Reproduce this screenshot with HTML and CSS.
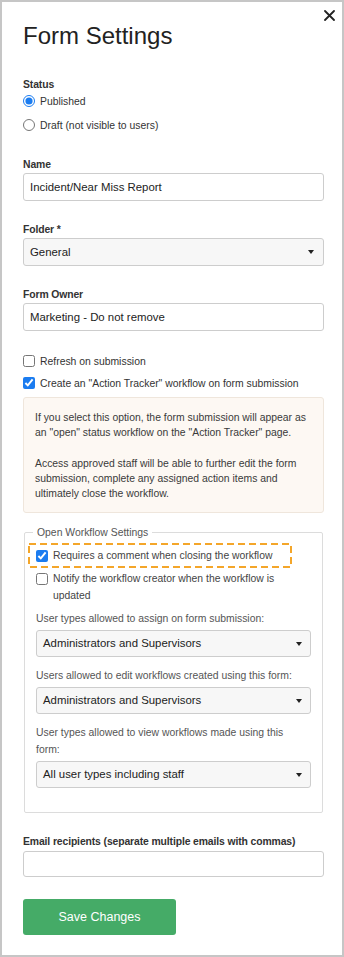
FILE: index.html
```html
<!DOCTYPE html>
<html lang="en">
<head>
    <meta charset="UTF-8">
    <meta name="viewport" content="width=device-width, initial-scale=1.0">
    <title>Form Settings</title>
    <link rel="stylesheet" href="styles.css">
</head>
<body>

<div class="panel">
    <button class="close" aria-label="Close">
        <svg width="11" height="11" viewBox="0 0 11 11"><path d="M1 1L10 10M10 1L1 10" stroke="#222" stroke-width="1.8" stroke-linecap="round"/></svg>
    </button>

    <h1 class="title">Form Settings</h1>

    <!-- Status -->
    <div class="status">
        <div class="label">Status</div>
        <label class="option"><input type="radio" name="status" checked>Published</label>
        <label class="option option-next"><input type="radio" name="status">Draft (not visible to users)</label>
    </div>

    <!-- Basic fields -->
    <div class="field field-name">
        <div class="label">Name</div>
        <input class="input" type="text" value="Incident/Near Miss Report">
    </div>

    <div class="field">
        <div class="label">Folder *</div>
        <div class="select">
            <span>General</span>
            <svg width="6" height="4" viewBox="0 0 6 4"><path d="M0 0H6L3 4Z" fill="#222"/></svg>
        </div>
    </div>

    <div class="field">
        <div class="label">Form Owner</div>
        <input class="input" type="text" value="Marketing - Do not remove">
    </div>

    <!-- Checkboxes -->
    <label class="option option-refresh"><input type="checkbox">Refresh on submission</label>
    <label class="option option-tracker"><input type="checkbox" checked>Create an "Action Tracker" workflow on form submission</label>

    <div class="info">
        <p>If you select this option, the form submission will appear as an "open" status workflow on the "Action Tracker" page.</p>
        <p>Access approved staff will be able to further edit the form submission, complete any assigned action items and ultimately close the workflow.</p>
    </div>

    <!-- Workflow settings -->
    <fieldset class="workflow">
        <legend>Open Workflow Settings</legend>

        <div class="highlight">
            <label class="option fs-option"><input type="checkbox" checked>Requires a comment when closing the workflow</label>
            <svg class="dash" width="264" height="25" viewBox="0 0 264 25"><rect x="1" y="1" width="262" height="23" fill="none" stroke="#f4a62a" stroke-width="2" stroke-dasharray="7 4"/></svg>
        </div>

        <label class="option fs-option fs-multi"><input type="checkbox">Notify the workflow creator when the workflow is updated</label>

        <div class="fs-label fs-first">User types allowed to assign on form submission:</div>
        <div class="select fs-select">
            <span>Administrators and Supervisors</span>
            <svg width="6" height="4" viewBox="0 0 6 4"><path d="M0 0H6L3 4Z" fill="#222"/></svg>
        </div>

        <div class="fs-label">Users allowed to edit workflows created using this form:</div>
        <div class="select fs-select">
            <span>Administrators and Supervisors</span>
            <svg width="6" height="4" viewBox="0 0 6 4"><path d="M0 0H6L3 4Z" fill="#222"/></svg>
        </div>

        <div class="fs-label">User types allowed to view workflows made using this form:</div>
        <div class="select fs-select">
            <span>All user types including staff</span>
            <svg width="6" height="4" viewBox="0 0 6 4"><path d="M0 0H6L3 4Z" fill="#222"/></svg>
        </div>
    </fieldset>

    <div class="field field-email">
        <div class="label">Email recipients (separate multiple emails with commas)</div>
        <input class="input input-email" type="text">
    </div>

    <button class="save">Save Changes</button>
</div>

</body>
</html>
```

FILE: styles.css
```css
/* Basic Reset */
* {
    margin: 0;
    padding: 0;
    box-sizing: border-box;
}
body {
    font-family: "Liberation Sans", Arial, sans-serif;
    font-size: 10.4px;
    color: #333;
    background: #fff;
}
/* Panel */
.panel {
    position: relative;
    width: 344px;
    height: 957px;
    border: 2px solid #c6c6c6;
    padding: 20px 18px 0 21px;
}
.close {
    position: absolute;
    top: 8px;
    right: 7px;
    width: 11px;
    height: 11px;
    border: none;
    background: none;
    display: flex;
}
.title {
    font-size: 24px;
    line-height: 28px;
    font-weight: 400;
    color: #222;
}
/* Labels and options */
.label {
    font-weight: 700;
    line-height: 15px;
    letter-spacing: -0.12px;
    color: #333;
}
.status {
    margin-top: 27px;
}
.option {
    display: flex;
    align-items: center;
    height: 18px;
    color: #333;
}
.option input {
    width: 12px;
    height: 12px;
    margin: 0 5px 0 0;
    accent-color: #1b7cf0;
    flex-shrink: 0;
}
.option-next {
    margin-top: 6px;
}
/* Fields */
.field {
    margin-top: 21px;
}
.field-name {
    margin-top: 23px;
}
.field .label {
    margin-bottom: 1px;
}
.input {
    display: block;
    width: 100%;
    height: 28px;
    border: 1px solid #cdcdcd;
    border-radius: 3px;
    padding: 0 6px;
    font-family: "Liberation Sans", Arial, sans-serif;
    font-size: 11.4px;
    color: #222;
    background: #fff;
    outline: none;
}
.select {
    display: flex;
    align-items: center;
    justify-content: space-between;
    height: 28px;
    border: 1px solid #cdcdcd;
    border-radius: 3px;
    padding: 0 9px 0 6px;
    font-size: 11.4px;
    color: #222;
    background: #f7f7f7;
}
.option-refresh {
    margin-top: 21px;
}
.option-tracker {
    margin-top: 4px;
}
/* Info box */
.info {
    margin-top: 5px;
    background: #fdf8f3;
    border: 1px solid #efe6dc;
    border-radius: 3px;
    padding: 12px 11px 11px 11px;
    line-height: 15px;
    color: #3a3a3a;
}
.info p + p {
    margin-top: 16px;
}
/* Workflow fieldset */
.workflow {
    margin: 12px 1px 0 1px;
    border: 1px solid #dcdcdc;
    border-radius: 2px;
    padding: 7px 11px 24px 11px;
    line-height: 17px;
}
.workflow legend {
    padding: 0 4px;
    margin-left: -3px;
    line-height: 15px;
    color: #555;
}
.highlight {
    position: relative;
}
.dash {
    position: absolute;
    left: -8px;
    top: -4px;
}
.fs-option {
    height: 17px;
    color: #444;
}
.fs-multi {
    height: auto;
    align-items: flex-start;
    margin-top: 6px;
}
.fs-multi input {
    margin-top: 2.5px;
}
.fs-label {
    margin-top: 10px;
    color: #555;
    padding-right: 4px;
}
.fs-first {
    margin-top: 6px;
}
.fs-select {
    margin-top: 3px;
    height: 27px;
    padding-right: 8px;
}
/* Email + save */
.field-email {
    margin-top: 21px;
}
.field-email .label {
    margin-bottom: 2px;
}
.input-email {
    height: 26px;
}
.save {
    display: block;
    margin-top: 22px;
    width: 153px;
    height: 36px;
    border: none;
    border-radius: 3px;
    background: #45ab67;
    color: #fff;
    font-family: "Liberation Sans", Arial, sans-serif;
    font-size: 12.5px;
    cursor: pointer;
}
```
